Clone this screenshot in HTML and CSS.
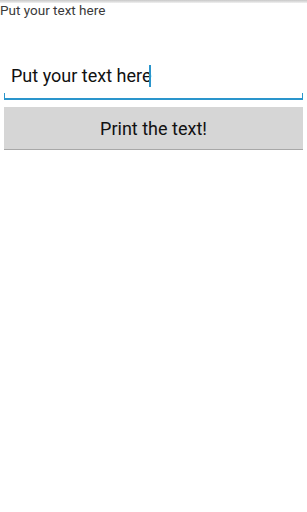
FILE: index.html
```html
<!DOCTYPE html>
<html lang="en">
<head>
    <meta charset="UTF-8">
    <meta name="viewport" content="width=device-width, initial-scale=1.0">
    <title>Print Text</title>
    <link rel="stylesheet" href="styles.css">
</head>
<body>
    <div class="topbar"></div>
    <p class="label">Put your text here</p>

    <div class="field">
        <span class="field-text">Put your text here</span><span class="caret"></span>
    </div>

    <button class="print-btn">Print the text!</button>
</body>
</html>
```

FILE: styles.css
```css
* {
    margin: 0;
    padding: 0;
    box-sizing: border-box;
    font-family: Roboto, 'Noto Sans', sans-serif;
}
body {
    background: #ffffff;
    width: 307px;
    height: 512px;
    overflow: hidden;
}
.topbar {
    height: 3px;
    background: linear-gradient(#c8c8c8, #f0f0f0);
}
.label {
    font-size: 13.5px;
    color: #3a3a3a;
    line-height: 15px;
}
.field {
    margin: 47px 4px 0 4px;
    height: 35px;
    padding: 0 0 0 7px;
    display: flex;
    align-items: flex-start;
    border-bottom: 2px solid #2a95cc;
    position: relative;
}
.field::before,
.field::after {
    content: "";
    position: absolute;
    bottom: 0;
    width: 1px;
    height: 5px;
    background: #2a95cc;
}
.field::before { left: 0; }
.field::after { right: 0; }
.field-text {
    font-size: 18px;
    color: #111;
    line-height: 22px;
}
.caret {
    width: 2px;
    height: 22px;
    background: #2a95cc;
    margin-left: -2px;
}
.print-btn {
    display: block;
    margin: 7px 4px 0 4px;
    width: 299px;
    height: 43px;
    background: #d6d6d6;
    border: none;
    border-bottom: 1px solid #a8a8a8;
    font-size: 18px;
    color: #111;
}
```
